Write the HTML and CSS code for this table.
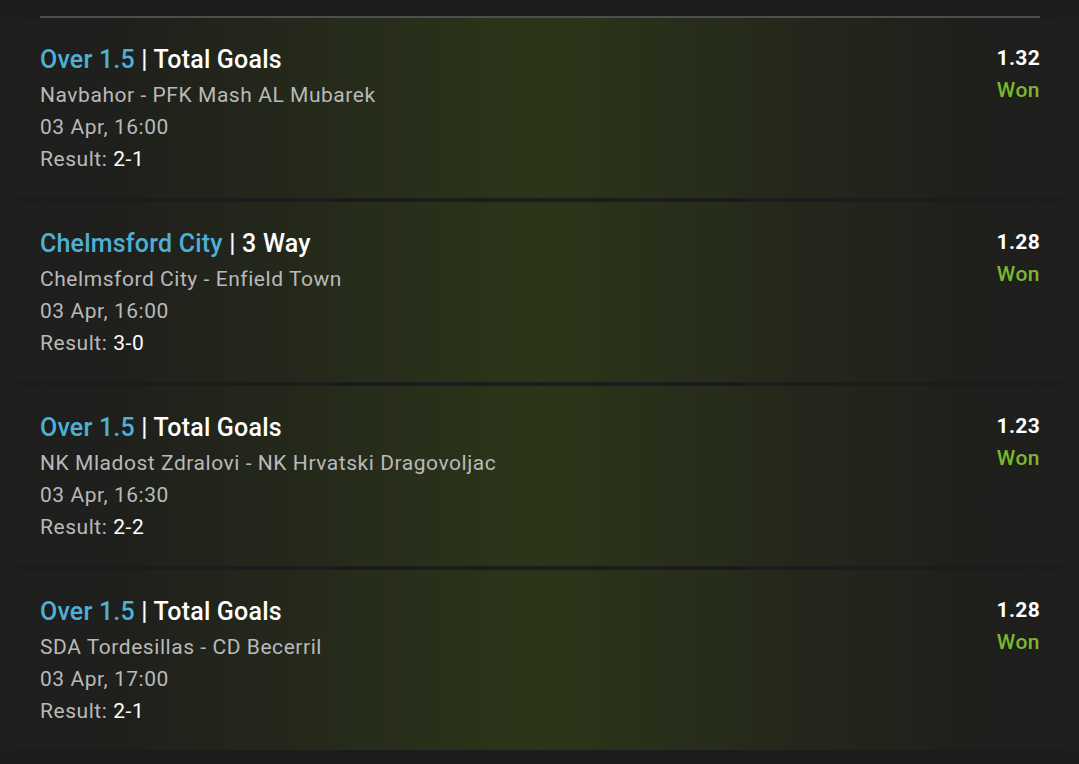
FILE: index.html
```html
<!DOCTYPE html>
<html>
<head>
<meta charset="utf-8">
<link rel="stylesheet" href="styles.css">
</head>
<body>
<div class="page">
  <div class="rule"></div>
  <div class="list">
    <div class="bet">
      <div class="info">
        <div class="title"><span class="sel">Over 1.5</span> <span class="bar">|</span> Total Goals</div>
        <div class="line first">Navbahor - PFK Mash AL Mubarek</div>
        <div class="line">03 Apr, 16:00</div>
        <div class="line">Result: <span class="res">2-1</span></div>
      </div>
      <div class="side">
        <div class="odds">1.32</div>
        <div class="won">Won</div>
      </div>
    </div>
    <div class="bet">
      <div class="info">
        <div class="title"><span class="sel">Chelmsford City</span> <span class="bar">|</span> 3 Way</div>
        <div class="line first">Chelmsford City - Enfield Town</div>
        <div class="line">03 Apr, 16:00</div>
        <div class="line">Result: <span class="res">3-0</span></div>
      </div>
      <div class="side">
        <div class="odds">1.28</div>
        <div class="won">Won</div>
      </div>
    </div>
    <div class="bet">
      <div class="info">
        <div class="title"><span class="sel">Over 1.5</span> <span class="bar">|</span> Total Goals</div>
        <div class="line first">NK Mladost Zdralovi - NK Hrvatski Dragovoljac</div>
        <div class="line">03 Apr, 16:30</div>
        <div class="line">Result: <span class="res">2-2</span></div>
      </div>
      <div class="side">
        <div class="odds">1.23</div>
        <div class="won">Won</div>
      </div>
    </div>
    <div class="bet">
      <div class="info">
        <div class="title"><span class="sel">Over 1.5</span> <span class="bar">|</span> Total Goals</div>
        <div class="line first">SDA Tordesillas - CD Becerril</div>
        <div class="line">03 Apr, 17:00</div>
        <div class="line">Result: <span class="res">2-1</span></div>
      </div>
      <div class="side">
        <div class="odds">1.28</div>
        <div class="won">Won</div>
      </div>
    </div>
  </div>
</div>
</body>
</html>
```

FILE: styles.css
```css
html, body {
  margin: 0;
  padding: 0;
  background: #1c1c1c;
}
body {
  font-family: Roboto, "Noto Sans", sans-serif;
  color: #fff;
  width: 1079px;
  height: 764px;
  overflow: hidden;
}
.page {
  padding-top: 16px;
}
.rule {
  height: 2px;
  margin: 0 39px 0 40px;
  background: #4e4e4e;
}
.list {
  display: flex;
  flex-direction: column;
  gap: 4px;
}
.bet {
  height: 180px;
  box-sizing: border-box;
  padding: 0 39px 0 40px;
  display: flex;
  justify-content: space-between;
  background: linear-gradient(90deg, #1e1e1e 0%, #1f201c 12%, #2c3519 50%, #1f201c 88%, #1e1e1e 100%);
}
.info {
  padding-top: 26px;
}
.title {
  font-size: 25px;
  line-height: 32px;
  font-weight: 500;
  letter-spacing: 0.2px;
  color: #fff;
}
.sel {
  color: #4db0d6;
}
.bar {
  color: #fff;
}
.line {
  font-size: 21px;
  line-height: 32px;
  letter-spacing: 0.55px;
  color: #b9b9b9;
}
.line.first {
  margin-top: 3px;
}
.res {
  color: #fff;
}
.side {
  padding-top: 24px;
  text-align: right;
}
.odds {
  font-size: 21px;
  line-height: 32px;
  font-weight: 700;
  letter-spacing: 0.3px;
  color: #fff;
}
.won {
  font-size: 21px;
  line-height: 32px;
  font-weight: 500;
  letter-spacing: 0.5px;
  color: #7db72d;
}
```
